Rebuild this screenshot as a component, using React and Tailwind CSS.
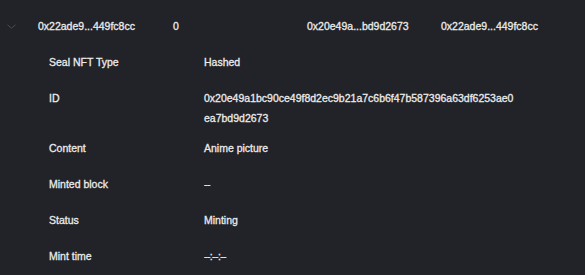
import React from "react";

const rows = [
  { label: "Seal NFT Type", value: "Hashed" },
  { label: "ID", value: null },
  { label: "Content", value: "Anime picture" },
  { label: "Minted block", value: "--", dash: true },
  { label: "Status", value: "Minting" },
  { label: "Mint time", value: "--:--:--", dash: true },
];

export default function App() {
  return (
    <div
      className="w-[585px] h-[275px] overflow-hidden bg-[#222328] text-[#ebebeb] text-[10.5px] leading-[20px] [-webkit-text-stroke:0.3px_#ebebeb]"
      style={{ fontFamily: '"Liberation Sans", Arial, sans-serif' }}
    >
      <div className="flex items-center pt-4 pb-2">
        <div className="w-[38px] flex items-center pl-[7px]">
          <svg width="9" height="5" viewBox="0 0 9 5" fill="none">
            <path d="M0.5 0.8 L4.5 4.2 L8.5 0.8" stroke="#4a4b51" strokeWidth="1" />
          </svg>
        </div>
        <div className="w-[135px]">0x22ade9...449fc8cc</div>
        <div className="w-[134px]">0</div>
        <div className="w-[134px]">0x20e49a...bd9d2673</div>
        <div>0x22ade9...449fc8cc</div>
      </div>
      <div className="flex flex-col">
        {rows.map((r) => (
          <div
            key={r.label}
            className={`flex pl-[49px] ${r.value === null ? "pt-2 pb-[2px]" : "py-2"}`}
          >
            <div className="w-[155px] shrink-0">{r.label}</div>
            <div className={r.dash ? "tracking-[-0.6px]" : ""}>
              {r.value === null ? (
                <>
                  <div>0x20e49a1bc90ce49f8d2ec9b21a7c6b6f47b587396a63df6253ae0</div>
                  <div>ea7bd9d2673</div>
                </>
              ) : (
                r.value
              )}
            </div>
          </div>
        ))}
      </div>
    </div>
  );
}
